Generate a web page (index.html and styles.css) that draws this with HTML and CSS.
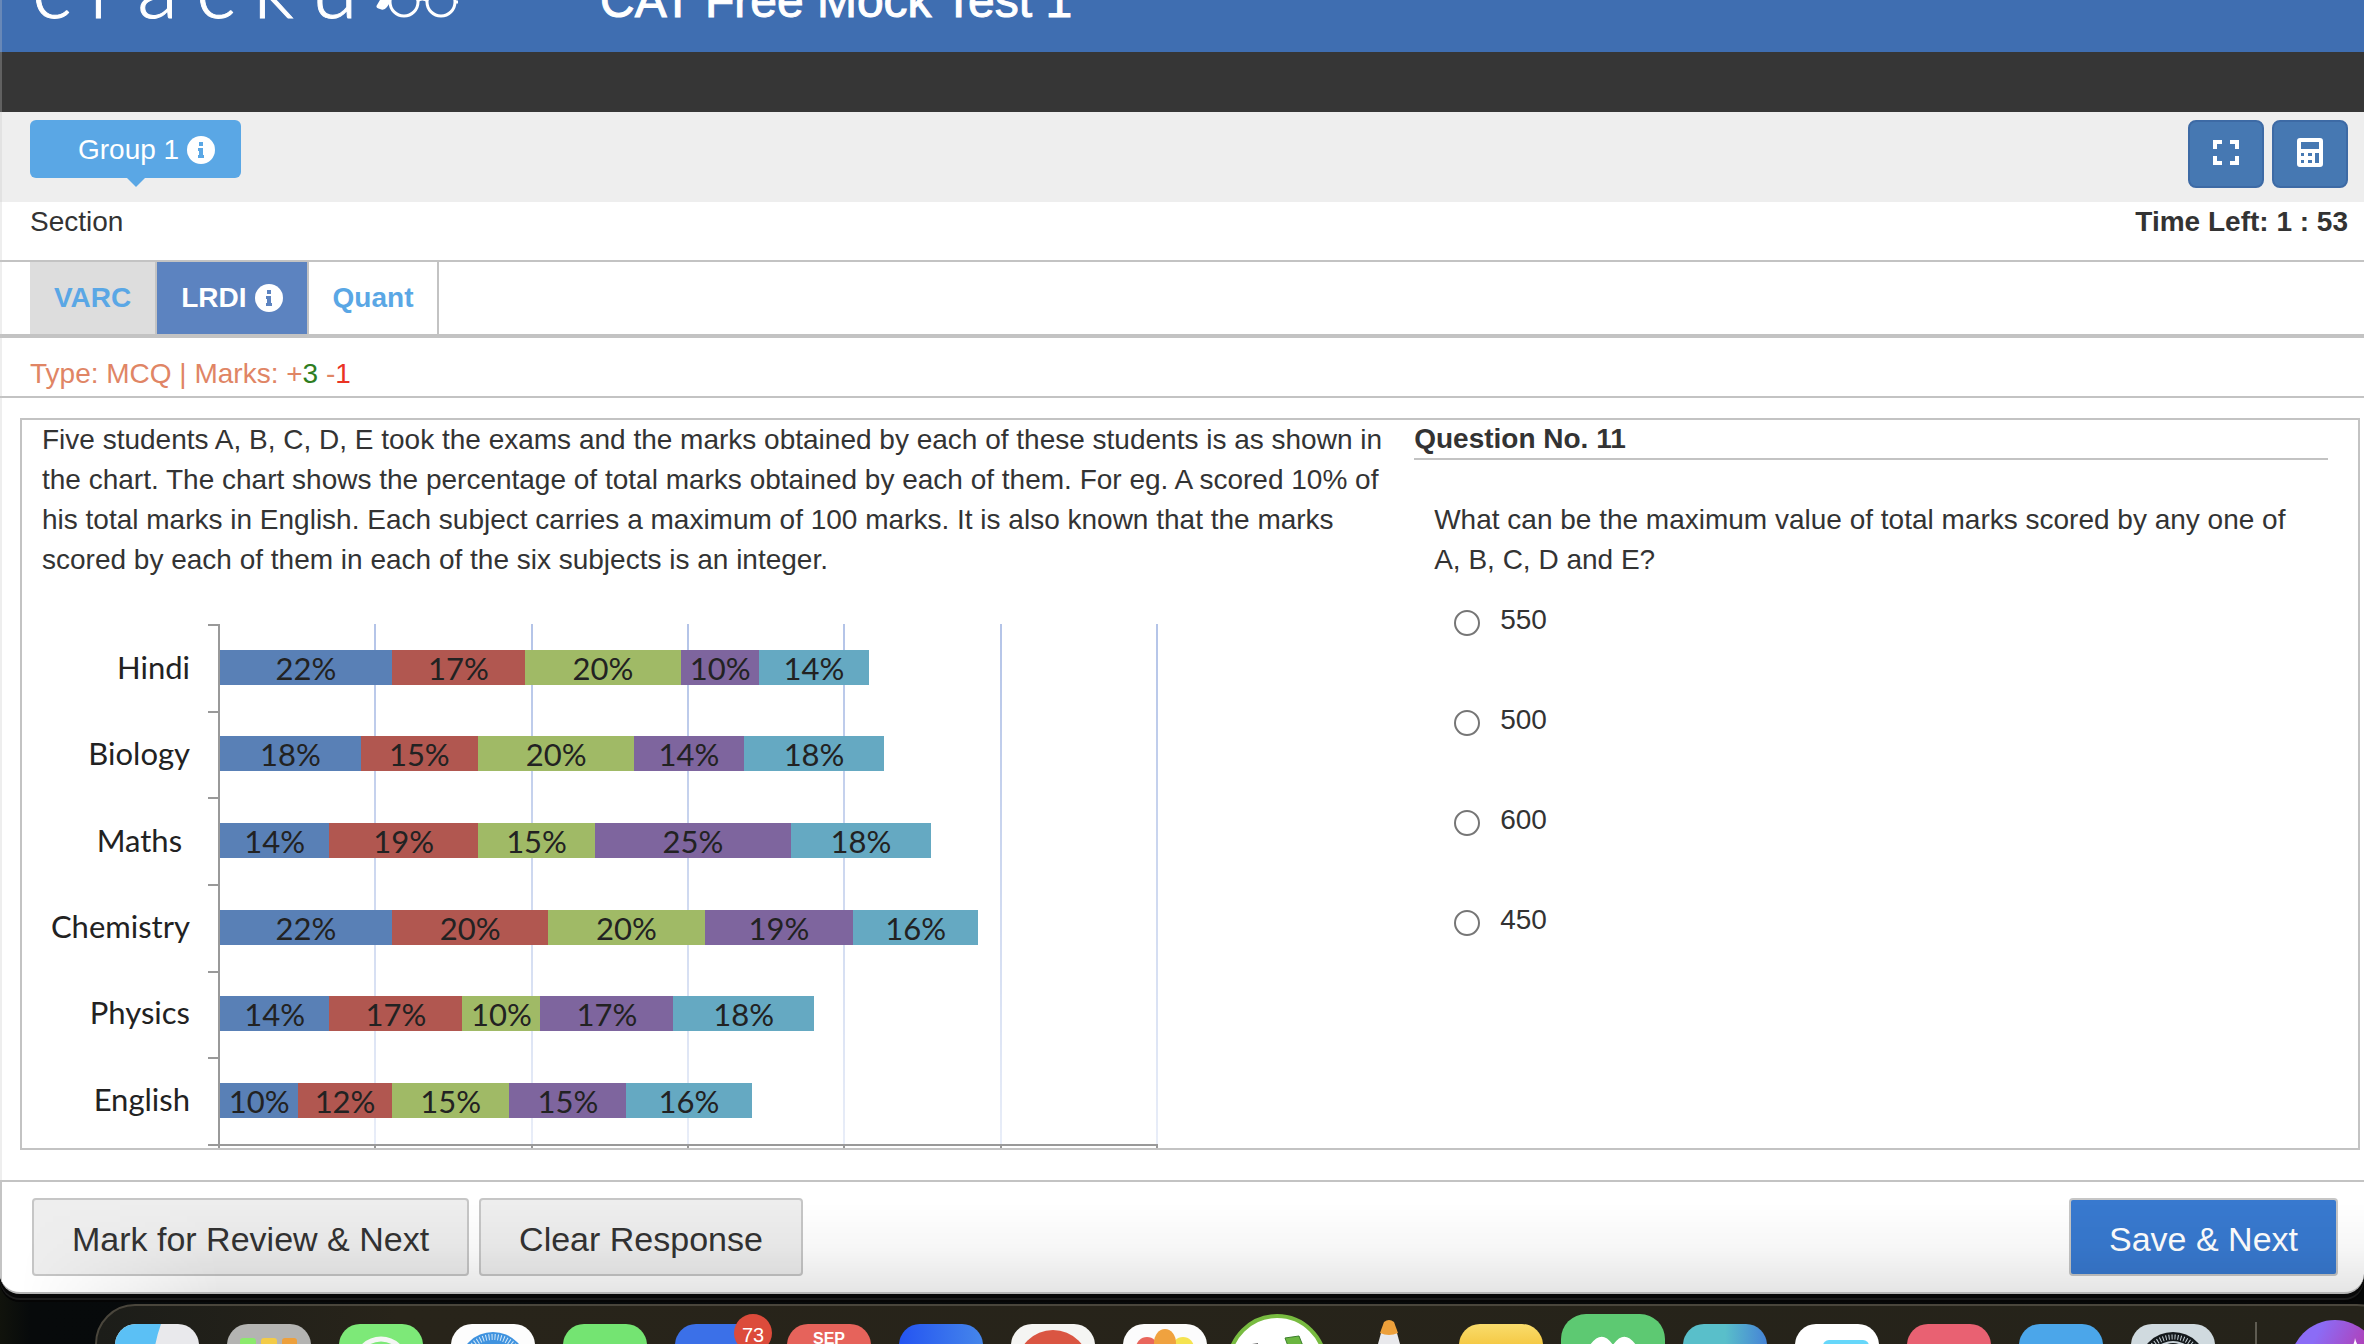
FILE: index.html
```html
<!DOCTYPE html>
<html lang="en">
<head>
<meta charset="utf-8">
<title>CAT Free Mock Test 1</title>
<link rel="stylesheet" href="styles.css">
</head>
<body>
<div class="window">
  <header class="masthead">
    <div class="logo" aria-label="cracku">
      <span>c</span><span>r</span><span>a</span><span>c</span><span>k</span><span>u</span>
      <svg class="glasses" viewBox="0 0 84 40" aria-hidden="true">
        <path d="M1 27 L11 10 Q17 4 19 12 Q16 22 11 29 Q8 33 4 31 Q-1 30 1 27Z" fill="#fff"/>
        <circle cx="28" cy="24" r="14" fill="none" stroke="#fff" stroke-width="3"/>
        <circle cx="65" cy="24" r="14" fill="none" stroke="#fff" stroke-width="3"/>
        <path d="M41 23 Q46 19 52 23 M78 24 H82" fill="none" stroke="#fff" stroke-width="3"/>
      </svg>
    </div>
    <h1 class="title">CAT Free Mock Test 1</h1>
  </header>
  <div class="strip"></div>

  <div class="groupbar">
    <button class="group" type="button">Group 1
      <svg class="info" viewBox="0 0 28 28" aria-hidden="true"><circle cx="14" cy="14" r="14" fill="#fff"/><path d="M12 6h4v4h-4zM11 12h5v7h1v3h-6v-3h1v-4h-1z" fill="currentColor"/></svg>
    </button>
    <div class="tools">
      <button class="tool" type="button" aria-label="Full screen">
        <svg width="26" height="30" viewBox="0 0 26 30"><path d="M2 11V4H9M17 4H24V11M24 18V25H17M9 25H2V18" fill="none" stroke="#fff" stroke-width="4"/></svg>
      </button>
      <button class="tool" type="button" aria-label="Calculator">
        <svg width="26" height="30" viewBox="0 0 26 30"><path fill="#fff" fill-rule="evenodd" d="M3 0h20q3 0 3 3v23q0 3-3 3H3q-3 0-3-3V3q0-3 3-3zM4 4v7h18V4zM4 15v3h3v-3zM11 15v3h4v-3zM18 15v10h4V15zM4 22v3h3v-3zM11 22v3h4v-3z"/></svg>
      </button>
    </div>
  </div>

  <div class="sectionbar"><span>Section</span><strong>Time Left: 1 : 53</strong></div>

  <nav class="tabs">
    <a class="tab tab-done" href="#varc">VARC</a>
    <a class="tab tab-active" href="#lrdi">LRDI
      <svg class="info" viewBox="0 0 28 28" aria-hidden="true"><circle cx="14" cy="14" r="14" fill="#fff"/><path d="M12 6h4v4h-4zM11 12h5v7h1v3h-6v-3h1v-4h-1z" fill="currentColor"/></svg></a>
    <a class="tab" href="#quant">Quant</a>
  </nav>

  <p class="marks">Type: MCQ | Marks: +<span class="plus">3</span> -<span class="minus">1</span></p>

  <main class="panel">
    <section class="passage">
      <p>Five students A, B, C, D, E took the exams and the marks obtained by each of these students is as shown in the chart. The chart shows the percentage of total marks obtained by each of them. For eg. A scored 10% of his total marks in English. Each subject carries a maximum of 100 marks. It is also known that the marks scored by each of them in each of the six subjects is an integer.</p>
      <figure class="chart">
        <div class="labels"><span>Hindi</span><span>Biology</span><span>Maths&nbsp;</span><span>Chemistry</span><span>Physics</span><span>English</span></div>
        <div class="yticks"><i></i><i></i><i></i><i></i><i></i><i></i></div>
        <div class="plot">
          <div class="bar"><span class="s1" style="width:18.333%">22%</span><span class="s2" style="width:14.167%">17%</span><span class="s3" style="width:16.667%">20%</span><span class="s4" style="width:8.333%">10%</span><span class="s5" style="width:11.667%">14%</span></div>
          <div class="bar"><span class="s1" style="width:15%">18%</span><span class="s2" style="width:12.5%">15%</span><span class="s3" style="width:16.667%">20%</span><span class="s4" style="width:11.667%">14%</span><span class="s5" style="width:15%">18%</span></div>
          <div class="bar"><span class="s1" style="width:11.667%">14%</span><span class="s2" style="width:15.833%">19%</span><span class="s3" style="width:12.5%">15%</span><span class="s4" style="width:20.833%">25%</span><span class="s5" style="width:15%">18%</span></div>
          <div class="bar"><span class="s1" style="width:18.333%">22%</span><span class="s2" style="width:16.667%">20%</span><span class="s3" style="width:16.667%">20%</span><span class="s4" style="width:15.833%">19%</span><span class="s5" style="width:13.333%">16%</span></div>
          <div class="bar"><span class="s1" style="width:11.667%">14%</span><span class="s2" style="width:14.167%">17%</span><span class="s3" style="width:8.333%">10%</span><span class="s4" style="width:14.167%">17%</span><span class="s5" style="width:15%">18%</span></div>
          <div class="bar"><span class="s1" style="width:8.333%">10%</span><span class="s2" style="width:10%">12%</span><span class="s3" style="width:12.5%">15%</span><span class="s4" style="width:12.5%">15%</span><span class="s5" style="width:13.333%">16%</span></div>
        </div>
        <div class="xticks"></div>
      </figure>
    </section>
    <section class="question">
      <h2>Question No. 11</h2>
      <form class="answers">
        <p>What can be the maximum value of total marks scored by any one of A, B, C, D and E?</p>
        <label class="option"><input type="radio" name="answer">550</label>
        <label class="option"><input type="radio" name="answer">500</label>
        <label class="option"><input type="radio" name="answer">600</label>
        <label class="option"><input type="radio" name="answer">450</label>
      </form>
    </section>
  </main>

  <footer class="actions">
    <button class="action" type="button">Mark for Review &amp; Next</button>
    <button class="action" type="button">Clear Response</button>
    <button class="action action-save" type="button">Save &amp; Next</button>
  </footer>
</div>

<div class="desktop">
<div class="dock" aria-label="Dock">
  <svg class="app" viewBox="0 0 84 84"><defs><clipPath id="tile"><rect width="84" height="84" rx="21"/></clipPath></defs><g clip-path="url(#tile)"><path fill="#e9e9ec" d="M0 0h84v84H0z"/><path fill="#5bc0f5" d="M0 0h46q-8 22-9 50v34H0z"/></g></svg>
  <svg class="app" viewBox="0 0 84 84"><rect width="84" height="84" rx="21" fill="#b4b4b2"/><rect x="13" y="14" width="16" height="16" rx="3" fill="#8bea6c"/><rect x="34" y="14" width="16" height="16" rx="3" fill="#f3cb47"/><rect x="55" y="14" width="15" height="16" rx="3" fill="#eda03c"/></svg>
  <svg class="app" viewBox="0 0 84 84"><rect width="84" height="84" rx="21" fill="#7de978"/><circle cx="42" cy="40" r="25" fill="#7de978" stroke="#f4f6f4" stroke-width="5"/></svg>
  <svg class="app" viewBox="0 0 84 84"><rect width="84" height="84" rx="21" fill="#fdfdfd"/><circle cx="42" cy="42" r="34" fill="#4093df"/><circle cx="42" cy="42" r="29" fill="none" stroke="#d5e9f8" stroke-width="6" stroke-dasharray="1 2"/></svg>
  <svg class="app" viewBox="0 0 84 84"><rect width="84" height="84" rx="21" fill="#74e472"/></svg>
  <svg class="app" viewBox="0 0 84 84"><rect width="84" height="84" rx="21" fill="#3b70e8"/><circle cx="78" cy="9" r="19" fill="#dc4b3b"/><text class="badge" x="78" y="18">73</text></svg>
  <svg class="app" viewBox="0 0 84 84"><rect width="84" height="84" rx="21" fill="#e6635b"/><text class="month" x="42" y="20">SEP</text></svg>
  <svg class="app" viewBox="0 0 84 84"><defs><linearGradient id="blue"><stop stop-color="#2454f2"/><stop offset="1" stop-color="#4586ea"/></linearGradient></defs><rect width="84" height="84" rx="21" fill="url(#blue)"/></svg>
  <svg class="app" viewBox="0 0 84 84"><rect width="84" height="84" rx="21" fill="#f5f5f3"/><circle cx="42" cy="42" r="36" fill="#da5542"/></svg>
  <svg class="app" viewBox="0 0 84 84"><rect width="84" height="84" rx="21" fill="#fcfcfc"/><circle cx="24" cy="24" r="11" fill="#e9665c"/><circle cx="60" cy="24" r="11" fill="#f5e350"/><ellipse cx="42" cy="19" rx="11" ry="14" fill="#f0a23f"/></svg>
  <svg class="app" viewBox="0 0 84 84"><circle cx="42" cy="40" r="48" fill="#fff" stroke="#78bb40" stroke-width="4"/><path d="M50 14L64 12 68 22H53z" fill="#6bb640" stroke="#3b7f2c"/><path d="M17 20l6-1v3h-6z" fill="#666"/></svg>
  <svg class="app" viewBox="0 0 84 84"><path d="M34 9H50L64 60H20z" fill="#e9e9ec"/><path d="M37-2Q42-6 47-2L51 9Q42 13 33 9z" fill="#eda03b"/></svg>
  <svg class="app" viewBox="0 0 84 84"><defs><linearGradient id="note" x2="0" y2="1"><stop stop-color="#f9dc6c"/><stop offset=".25" stop-color="#f5c944"/></linearGradient></defs><rect width="84" height="84" rx="21" fill="url(#note)"/></svg>
  <svg class="app" viewBox="0 0 84 84"><rect x="-10" y="-10" width="104" height="104" rx="25" fill="#5dc972"/><path d="M17 24Q30 3 42 21Q54 3 67 24V50H17z" fill="#fff"/></svg>
  <svg class="app" viewBox="0 0 84 84"><defs><linearGradient id="teal"><stop offset=".5" stop-color="#59bfca"/><stop offset="1" stop-color="#4683d6"/></linearGradient></defs><rect width="84" height="84" rx="21" fill="url(#teal)"/></svg>
  <svg class="app" viewBox="0 0 84 84"><rect width="84" height="84" rx="21" fill="#fff"/><rect x="28" y="16" width="46" height="40" rx="6" fill="#66d7fa"/></svg>
  <svg class="app" viewBox="0 0 84 84"><rect width="84" height="84" rx="21" fill="#e96172"/><path d="M30 30L61 20V50H30z" fill="#fff"/></svg>
  <svg class="app" viewBox="0 0 84 84"><rect width="84" height="84" rx="21" fill="#4ba6ea"/><path d="M36 27L42 37M48 27L42 37" stroke="#fff" stroke-width="6" stroke-linecap="round"/></svg>
  <svg class="app" viewBox="0 0 84 84"><rect width="84" height="84" rx="21" fill="#d0dadf"/><circle cx="42" cy="42" r="34" fill="#14191c"/><circle cx="42" cy="42" r="29" fill="none" stroke="#c8d2d8" stroke-width="5" stroke-dasharray="1 2"/><circle cx="42" cy="42" r="25" fill="#c8d2d8"/><circle cx="42" cy="36" r="17" fill="#14191c"/></svg>
  <span class="divider"></span>
  <svg class="app" viewBox="0 0 84 84"><defs><linearGradient id="violet" x2="1" y2=".5"><stop offset=".3" stop-color="#8b6cf6"/><stop offset=".8" stop-color="#b13fb6"/></linearGradient></defs><circle cx="42" cy="41" r="45" fill="url(#violet)"/><path d="M62 14Q64 24 72 26Q64 28 62 38Q60 28 54 26Q61 24 62 14Z" fill="#fff"/></svg>
</div>
</div>
</body>
</html>
```

FILE: styles.css
```css
* { box-sizing: border-box; }
html { height: 100%; overflow: hidden; }
body {
  display: flex;
  flex-direction: column;
  margin: 0;
  height: 100%;
  overflow: hidden;
  background: linear-gradient(90deg, #11130c, #070a0b 30px, #060707);
  color: #333;
  font: 28px/40px "Liberation Sans", Arial, sans-serif;
}
p, h1, h2, figure { margin: 0; }
button, input { font: inherit; color: inherit; margin: 0; }

.window {
  position: relative;
  z-index: 1;
  flex: none;
  background: #fff;
  border-bottom: 2px solid #b5b5b5;
  border-radius: 0 0 20px 20px;
  box-shadow: 0 4px 0 #080808, 0 6px 0 #1c1c1c, 0 8px 0 #050505;
  overflow: hidden;
}
.window::before {
  content: "";
  position: absolute;
  inset: 0 auto 0 0;
  width: 2px;
  background: rgba(200, 200, 200, .3);
}
.window::after {
  content: "";
  position: absolute;
  inset: auto 0 0 0;
  height: 90px;
  pointer-events: none;
  background: linear-gradient(rgba(0, 0, 0, 0), rgba(0, 0, 0, .03) 50%, rgba(0, 0, 0, .1));
  mask-image: linear-gradient(90deg, transparent 20px, #000 220px);
}

.masthead {
  display: flex;
  align-items: flex-end;
  height: 52px;
  padding: 0 32px 28px;
  overflow: hidden;
  background: #3f6eb1;
  color: #fff;
}
.logo {
  display: flex;
  align-items: baseline;
  gap: 18px;
  width: 568px;
  padding-bottom: 6px;
  font: 300 84px/46px Lato, sans-serif;
  -webkit-text-stroke: 1px #fff;
}
.glasses { width: 84px; height: 40px; }
.title { font-size: 48px; line-height: 46px; font-weight: 400; -webkit-text-stroke: 1px #fff; }
.strip { height: 60px; background: #363636; }

.groupbar {
  display: flex;
  justify-content: space-between;
  align-items: flex-start;
  padding: 8px 16px 14px 30px;
  background: #eee;
}
.group {
  position: relative;
  display: flex;
  align-items: center;
  gap: 8px;
  height: 58px;
  padding: 2px 26px 0 48px;
  border: 0;
  border-radius: 6px;
  background: #5aa7e5;
  color: #fff;
}
.group::after {
  content: "";
  position: absolute;
  top: 100%;
  left: 50%;
  border: 9px solid transparent;
  border-top-color: #5aa7e5;
  border-bottom: 0;
  transform: translateX(-50%);
}
.info { flex: none; width: 28px; height: 28px; }
.group .info { color: #5aa7e5; }
.tools { display: flex; gap: 8px; }
.tool {
  display: flex;
  align-items: center;
  justify-content: center;
  width: 76px;
  height: 68px;
  padding: 0 0 2px;
  border: 2px solid #3d6aa5;
  border-radius: 8px;
  background: #4678b2;
}

.sectionbar {
  display: flex;
  justify-content: space-between;
  padding: 0 16px 18px 30px;
  border-bottom: 2px solid #c3c3c3;
}
.tabs {
  display: flex;
  height: 76px;
  padding-left: 30px;
  border-bottom: 4px solid #c3c3c3;
}
.tab {
  display: flex;
  align-items: center;
  gap: 8px;
  padding: 0 24px;
  border-right: 2px solid #c3c3c3;
  color: #5aa7e5;
  font-weight: 700;
  text-decoration: none;
}
.tab-done { background: #ddd; }
.tab-active { background: #5c83c0; color: #fff; }
.tab-active .info { color: #5c83c0; }
.marks {
  padding: 16px 30px 2px;
  border-bottom: 2px solid #c3c3c3;
  color: #e08565;
}
.plus { color: #2f7d1f; }
.minus { color: #ea3323; }

.panel {
  display: grid;
  grid-template-columns: 47fr 32fr;
  gap: 30px;
  margin: 20px 4px 30px 20px;
  padding: 0 30px 0 20px;
  border: 2px solid #c3c3c3;
}
.chart {
  display: grid;
  grid-template-columns: 148px 28px 1fr;
  grid-template-rows: 522px 2px;
  max-width: 1116px;
  margin-top: 44px;
  font: 31px/40px Lato, Carlito, sans-serif;
  color: #222;
}
.labels, .yticks, .plot { display: grid; grid-template-rows: repeat(6, 1fr); }
.labels { align-items: center; padding-bottom: 4px; text-align: right; }
.yticks { width: 10px; margin-left: auto; border-bottom: 2px solid #999; }
.yticks i { border-top: 2px solid #999; }
.plot {
  align-items: center;
  border-left: 2px solid #999;
  border-bottom: 2px solid #999;
  background:
    linear-gradient(rgba(255, 255, 255, 0), rgba(255, 255, 255, .7)),
    repeating-linear-gradient(90deg, transparent 0 calc(100% / 6 - 2px), #b4c4e8 calc(100% / 6 - 2px) calc(100% / 6));
}
.bar { display: flex; }
.bar span { height: 35px; line-height: 37px; text-align: center; white-space: nowrap; }
.s1 { background: #5980b6; }
.s2 { background: #b15750; }
.s3 { background: #a0ba66; }
.s4 { background: #7e659e; }
.s5 { background: #65a9c2; }
.xticks {
  grid-column: 3;
  border-left: 2px solid #999;
  background: repeating-linear-gradient(90deg, transparent 0 calc(100% / 6 - 2px), #999 calc(100% / 6 - 2px) calc(100% / 6));
}

.question h2 {
  border-bottom: 2px solid #c3c3c3;
  font-size: 28px;
  line-height: 38px;
}
.answers { padding: 40px 20px 0; }
.option {
  display: flex;
  gap: 20px;
  height: 40px;
  margin: 20px 0 60px;
  padding-left: 20px;
}
.option input {
  appearance: none;
  width: 26px;
  height: 26px;
  margin-top: 10px;
  border: 2px solid #767676;
  border-radius: 50%;
  background: #fff;
}

.actions {
  display: flex;
  gap: 10px;
  padding: 16px 26px 16px 30px;
  border-top: 2px solid #c3c3c3;
  border-left: 2px solid #c3c3c3;
}
.action {
  height: 78px;
  padding: 4px 38px 0;
  border: 2px solid #c6c6c6;
  border-radius: 4px;
  background: #eee;
  font-size: 34px;
}
.action-save { margin-left: auto; background: #3879cf; color: #fff; }

.desktop { flex: 1 1 0; min-height: 0; overflow: hidden; padding: 10px 0 0 95px; }
.dock {
  display: flex;
  gap: 28px;
  width: max-content;
  height: 120px;
  padding: 18px 18px 0;
  border: 2px solid #4a463c;
  border-radius: 40px;
  background: linear-gradient(90deg, #1c1d19, #28241a 300px, #25231a);
}
.app { flex: none; width: 84px; height: 84px; overflow: visible; }
.divider { width: 2px; height: 84px; margin: -2px 8px 0 12px; background: #5f5c52; }
.badge { font-size: 20px; fill: #fff; text-anchor: middle; }
.month { font-size: 16px; font-weight: 700; fill: #fff; text-anchor: middle; }
```
